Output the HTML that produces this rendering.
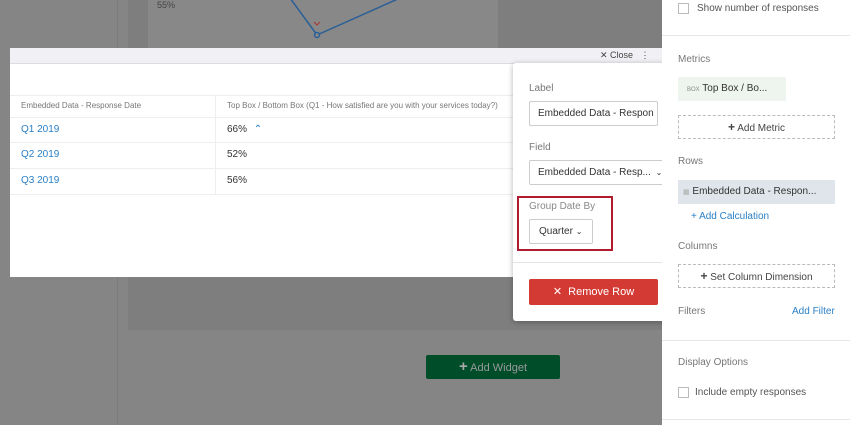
<!DOCTYPE html>
<html><head><style>
*{margin:0;padding:0;box-sizing:border-box}
body{width:850px;height:425px;overflow:hidden;background:#858585;font-family:"Liberation Sans",sans-serif;position:relative}
.a{position:absolute}
</style></head><body>
<div class="a" style="left:117px;top:0;width:1px;height:425px;background:#7c7c7c"></div>
<div class="a" style="left:128px;top:0;width:534px;height:330px;background:#7e7e7e"></div>
<div class="a" style="left:148px;top:0;width:350px;height:48px;background:#888"></div>
<div class="a" style="left:157px;top:0;font-size:9px;color:#444">55%</div>
<svg class="a" style="left:280px;top:0" width="140" height="48"><polyline points="10,-2 37,35 120,-2" fill="none" stroke="#2a5f96" stroke-width="1.5"/><circle cx="37" cy="35" r="2.5" fill="#888" stroke="#2a5f96" stroke-width="1.5"/><path d="M34 22l3 3 3-3" stroke="#a33" fill="none"/></svg>
<!-- modal -->
<div class="a" style="left:10px;top:48px;width:652px;height:229px;background:#fff"></div>
<div class="a" style="left:10px;top:48px;width:652px;height:16px;background:#f1f1f5;border-bottom:1px solid #ddd"></div>
<div class="a" style="left:600px;top:50px;font-size:9px;color:#444">✕ Close &nbsp;&nbsp;⋮</div>
<div class="a" style="left:10px;top:95px;width:505px;height:1px;background:#eee"></div>
<div class="a" style="left:215px;top:95px;width:1px;height:100px;background:#eee"></div>
<div class="a" style="left:21px;top:101px;font-size:8px;color:#777">Embedded Data - Response Date</div>
<div class="a" style="left:227px;top:101px;font-size:8px;color:#777">Top Box / Bottom Box (Q1 - How satisfied are you with your services today?)</div>
<div class="a" style="left:10px;top:117px;width:505px;height:1px;background:#eee"></div>
<div class="a" style="left:10px;top:142px;width:505px;height:1px;background:#eee"></div>
<div class="a" style="left:10px;top:168px;width:505px;height:1px;background:#eee"></div>
<div class="a" style="left:10px;top:194px;width:505px;height:1px;background:#eee"></div>
<div class="a" style="left:21px;top:124px;font-size:10px;color:#2a7fc6">Q1 2019</div>
<div class="a" style="left:21px;top:149px;font-size:10px;color:#2a7fc6">Q2 2019</div>
<div class="a" style="left:21px;top:175px;font-size:10px;color:#2a7fc6">Q3 2019</div>
<div class="a" style="left:227px;top:124px;font-size:10px;color:#333">66% <span style="color:#2a7fc6;margin-left:4px">⌃</span></div>
<div class="a" style="left:227px;top:149px;font-size:10px;color:#333">52%</div>
<div class="a" style="left:227px;top:175px;font-size:10px;color:#333">56%</div>
<!-- add widget -->
<div class="a" style="left:426px;top:355px;width:134px;height:24px;background:#004d29;border-radius:2px;color:#9a9a9a;font-size:11px;line-height:24px;text-align:center"><b style="font-size:15px;color:#aaa">+</b> Add Widget</div>
<!-- popover -->
<div class="a" style="left:513px;top:63px;width:160px;height:258px;background:#fff;border-radius:3px;box-shadow:0 1px 6px rgba(0,0,0,.3)"></div>
<div class="a" style="left:529px;top:83px;font-size:10px;color:#777">Label</div>
<div class="a" style="left:529px;top:101px;width:129px;height:25px;border:1px solid #ccc;border-radius:2px;font-size:10px;color:#333;padding:6px 8px;white-space:nowrap;overflow:hidden">Embedded Data - Respon</div>
<div class="a" style="left:529px;top:142px;font-size:10px;color:#777">Field</div>
<div class="a" style="left:529px;top:160px;width:137px;height:25px;border:1px solid #ccc;border-radius:2px;font-size:10px;color:#333;padding:6px 8px;white-space:nowrap">Embedded Data - Resp... <span style="font-size:8px;margin-left:2px">⌄</span></div>
<div class="a" style="left:517px;top:196px;width:96px;height:55px;border:2px solid #b01c2e"></div>
<div class="a" style="left:529px;top:201px;font-size:10px;color:#888">Group Date By</div>
<div class="a" style="left:529px;top:219px;width:64px;height:25px;border:1px solid #ccc;border-radius:2px;font-size:10px;color:#333;padding:6px 9px">Quarter <span style="font-size:8px">⌄</span></div>
<div class="a" style="left:513px;top:262px;width:160px;height:1px;background:#e4e4e4"></div>
<div class="a" style="left:529px;top:279px;width:129px;height:26px;background:#d43a34;border-radius:2px;color:#fff;font-size:11px;line-height:26px;text-align:center">✕&nbsp;&nbsp;Remove Row</div>
<!-- right panel -->
<div class="a" style="left:662px;top:0;width:188px;height:425px;background:#fff;z-index:-0"></div>
<div class="a" style="left:662px;top:35px;width:188px;height:1px;background:#e6e6e6"></div>
<div class="a" style="left:662px;top:340px;width:188px;height:1px;background:#e6e6e6"></div>
<div class="a" style="left:662px;top:419px;width:188px;height:1px;background:#e6e6e6"></div>
<div class="a" style="left:678px;top:3px;width:11px;height:11px;border:1px solid #bbb"></div>
<div class="a" style="left:697px;top:3px;font-size:10px;color:#555">Show number of responses</div>
<div class="a" style="left:678px;top:54px;font-size:10px;color:#777">Metrics</div>
<div class="a" style="left:678px;top:77px;width:108px;height:24px;background:#eef5ee;font-size:10px;color:#333;line-height:24px;padding-left:9px"><span style="font-size:6px;color:#888">BOX</span> Top Box / Bo...</div>
<div class="a" style="left:678px;top:115px;width:157px;height:24px;border:1px dashed #bbb;font-size:10px;color:#444;line-height:22px;text-align:center"><b style="font-size:12px">+</b> Add Metric</div>
<div class="a" style="left:678px;top:156px;font-size:10px;color:#777">Rows</div>
<div class="a" style="left:678px;top:180px;width:157px;height:24px;background:#dfe5ea;font-size:10px;color:#333;line-height:24px;padding-left:5px"><span style="font-size:7px;color:#aaa">▦</span> Embedded Data - Respon...</div>
<div class="a" style="left:691px;top:211px;font-size:10px;color:#2a7fc6">+ Add Calculation</div>
<div class="a" style="left:678px;top:241px;font-size:10px;color:#777">Columns</div>
<div class="a" style="left:678px;top:264px;width:157px;height:24px;border:1px dashed #bbb;font-size:10px;color:#444;line-height:22px;text-align:center"><b style="font-size:12px">+</b> Set Column Dimension</div>
<div class="a" style="left:678px;top:306px;font-size:10px;color:#777">Filters</div>
<div class="a" style="left:792px;top:306px;font-size:10px;color:#2a7fc6">Add Filter</div>
<div class="a" style="left:678px;top:357px;font-size:10px;color:#777">Display Options</div>
<div class="a" style="left:678px;top:387px;width:11px;height:11px;border:1px solid #bbb"></div>
<div class="a" style="left:695px;top:387px;font-size:10px;color:#555">Include empty responses</div>
</body></html>
